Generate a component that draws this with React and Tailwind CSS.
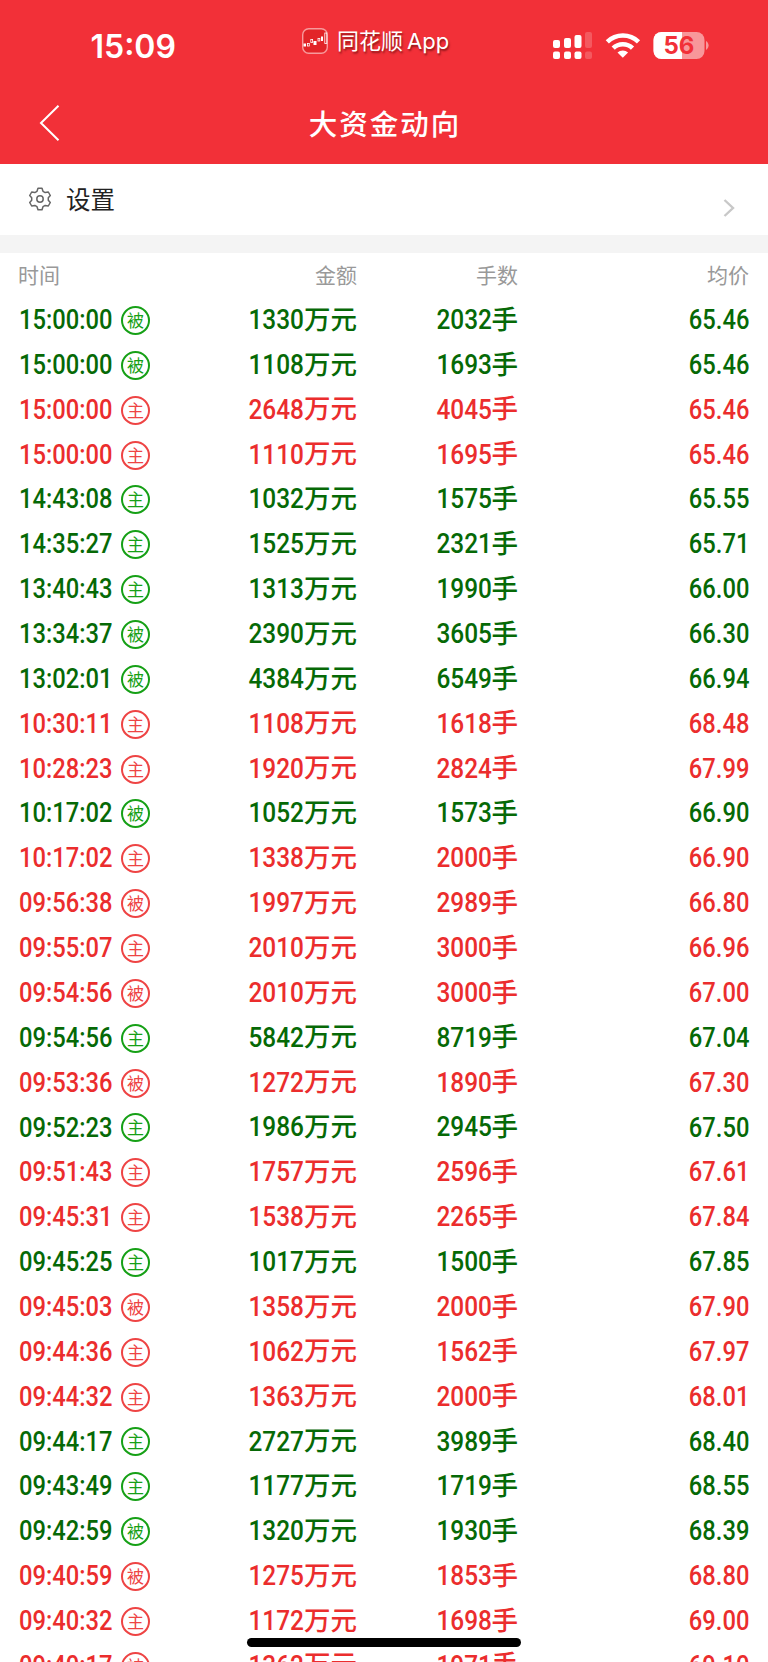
const rows = [
  ["15:00:00", "被", "1330", "2032", "65.46", 0],
  ["15:00:00", "被", "1108", "1693", "65.46", 0],
  ["15:00:00", "主", "2648", "4045", "65.46", 1],
  ["15:00:00", "主", "1110", "1695", "65.46", 1],
  ["14:43:08", "主", "1032", "1575", "65.55", 0],
  ["14:35:27", "主", "1525", "2321", "65.71", 0],
  ["13:40:43", "主", "1313", "1990", "66.00", 0],
  ["13:34:37", "被", "2390", "3605", "66.30", 0],
  ["13:02:01", "被", "4384", "6549", "66.94", 0],
  ["10:30:11", "主", "1108", "1618", "68.48", 1],
  ["10:28:23", "主", "1920", "2824", "67.99", 1],
  ["10:17:02", "被", "1052", "1573", "66.90", 0],
  ["10:17:02", "主", "1338", "2000", "66.90", 1],
  ["09:56:38", "被", "1997", "2989", "66.80", 1],
  ["09:55:07", "主", "2010", "3000", "66.96", 1],
  ["09:54:56", "被", "2010", "3000", "67.00", 1],
  ["09:54:56", "主", "5842", "8719", "67.04", 0],
  ["09:53:36", "被", "1272", "1890", "67.30", 1],
  ["09:52:23", "主", "1986", "2945", "67.50", 0],
  ["09:51:43", "主", "1757", "2596", "67.61", 1],
  ["09:45:31", "主", "1538", "2265", "67.84", 1],
  ["09:45:25", "主", "1017", "1500", "67.85", 0],
  ["09:45:03", "被", "1358", "2000", "67.90", 1],
  ["09:44:36", "主", "1062", "1562", "67.97", 1],
  ["09:44:32", "主", "1363", "2000", "68.01", 1],
  ["09:44:17", "主", "2727", "3989", "68.40", 0],
  ["09:43:49", "主", "1177", "1719", "68.55", 0],
  ["09:42:59", "被", "1320", "1930", "68.39", 0],
  ["09:40:59", "被", "1275", "1853", "68.80", 1],
  ["09:40:32", "主", "1172", "1698", "69.00", 1],
  ["09:40:17", "被", "1362", "1971", "69.10", 1],
];

const fits = {
  time: "origin-left scale-x-[0.885]",
  count: "origin-right scale-x-[0.91]",
  price: "origin-right scale-x-[0.885]",
};

function Num({ children, fit }) {
  return (
    <span className={`inline-block pt-[2px] font-[Roboto,sans-serif] text-[26.8px] font-medium leading-none ${fits[fit]}`}>
      {children}
    </span>
  );
}

function Unit({ children }) {
  return <span className="pb-[3px] text-[26.5px] font-medium leading-none">{children}</span>;
}

function Row({ row }) {
  const [time, kind, amount, lots, price, up] = row;
  return (
    <div className={`grid h-[44.86px] shrink-0 grid-cols-[121px_30px_206px_161px_231px] items-center ${up ? "text-[#eb2d2d]" : "text-[#066906]"}`}>
      <div className="flex pl-[18.5px]"><Num fit="time">{time}</Num></div>
      <div className={`mt-[2px] flex size-[29px] items-center justify-center rounded-full border-2 pb-[2px] text-[17px] leading-none ${up ? "border-[#ee4444] text-[#ee4444]" : "border-[#16a016] text-[#16a016]"}`}>{kind}</div>
      <div className="flex items-center justify-end"><Num fit="count">{amount}</Num><Unit>万元</Unit></div>
      <div className="flex items-center justify-end"><Num fit="count">{lots}</Num><Unit>手</Unit></div>
      <div className="flex justify-end"><Num fit="price">{price}</Num></div>
    </div>
  );
}

function StatusIcons() {
  return (
    <svg className="h-[30px] w-[160px]" viewBox="552 30 160 30">
      <g fill="#fff">
        <rect x="553" y="40" width="7" height="8" rx="2" />
        <rect x="564" y="38" width="7" height="10" rx="2" />
        <rect x="574.5" y="35" width="7" height="13" rx="2" />
        <rect x="585" y="32" width="7" height="16" rx="2" opacity=".2" />
        <rect x="553" y="51.5" width="7" height="7.5" rx="2" />
        <rect x="564" y="51.5" width="7" height="7.5" rx="2" />
        <rect x="574.5" y="51.5" width="7" height="7.5" rx="2" />
        <rect x="585" y="51.5" width="7" height="7.5" rx="2" opacity=".2" />
        <path d="M622.8 57.700l-5.300-5.200a7.800 7.800 0 0 1 10.600 0z" />
      </g>
      <g fill="none" stroke="#fff" strokeWidth="4.600">
        <path d="M607.300 41.800a22.600 22.600 0 0 1 31.200 0" />
        <path d="M613.200 48.200a13.800 13.800 0 0 1 19.300 0" />
      </g>
      <clipPath id="battery"><rect x="653.5" y="32" width="51" height="27" rx="8" /></clipPath>
      <g clipPath="url(#battery)">
        <rect x="653" y="32" width="52" height="27" fill="#f8979a" />
        <rect x="653" y="32" width="29" height="27" fill="#fff" />
      </g>
      <path d="M706 41a5.200 5.200 0 0 1 0 9z" fill="#f8979a" />
      <text x="679" y="54" textAnchor="middle" className="font-[Inter,sans-serif] text-[24px] font-bold" fill="#f23038">56</text>
    </svg>
  );
}

export default function App() {
  return (
    <div className="relative flex h-[1662px] w-[768px] flex-col overflow-hidden bg-white font-['Noto_Sans_CJK_SC',sans-serif]">
      <header className="h-[163.5px] shrink-0 bg-[#f23038] text-white">
        <div className="grid h-[86px] grid-cols-[302px_250px_1fr]">
          <div className="pl-[90.5px] pt-[30px] font-[Inter,sans-serif] text-[32px] font-semibold leading-[34px]">15:09</div>
          <div className="flex h-[82px] items-center gap-[9px]">
            <svg className="size-[26px]" viewBox="0 0 26 26">
              <rect x=".7" y=".7" width="24.6" height="24.6" rx="6" fill="#e22428" stroke="#f79a9c" strokeWidth="1.4" />
              <g fill="#fff"><rect x="1.5" y="15.5" width="2.5" height="3" /><rect x="11.5" y="13" width="3" height="4" /><rect x="19" y="8.5" width="2" height="4.5" /></g>
              <g fill="none" stroke="#fff" strokeWidth=".8"><rect x="5.5" y="15.5" width="1.8" height="2.5" /><rect x="8.8" y="11.5" width="1.8" height="3" /><rect x="16" y="10.5" width="1.8" height="2.5" /><rect x="22.8" y="5" width="2" height="10.5" /></g>
            </svg>
            <span className="whitespace-nowrap pb-[2px] text-[22px] leading-[26px] [text-shadow:1px_2px_2px_rgba(60,0,0,0.55)]">同花顺<span className="ml-[4px] font-[Inter,sans-serif]">App</span></span>
          </div>
          <div className="pt-[30px]"><StatusIcons /></div>
        </div>
        <div className="grid h-[74px] grid-cols-[120px_1fr_120px] items-center">
          <svg className="ml-[38px] h-[38px] w-[24px]" viewBox="0 0 24 38" fill="none" stroke="#fff" strokeWidth="2"><path d="M20.5 1.8 3 19l17.500 17.300" /></svg>
          <h1 className="pl-[2px] text-center text-[28.5px] font-medium leading-[36px] tracking-[2px]">大资金动向</h1>
        </div>
      </header>

      <div className="flex h-[71.5px] shrink-0 items-center">
        <svg className="ml-[28px] size-[24px]" viewBox="0 0 24 24" fill="none" stroke="#666" strokeWidth="1.500" strokeLinejoin="round">
          <path d="M10 1.300h4l1 3 2.200 1.300 3.100-.6 2 3.500-2 2.300v2.400l2 2.300-2 3.500-3.100-.6L15 19.700l-1 3h-4l-1-3-2.200-1.300-3.100.6-2-3.500 2-2.300v-2.400l-2-2.300 2-3.500 3.100.6L9 4.300z" />
          <circle cx="12" cy="12" r="3.200" />
        </svg>
        <span className="ml-[14px] text-[24.5px] leading-[30px] text-[#222]">设置</span>
        <svg className="ml-auto mr-[32px] mt-[18px] h-[20px] w-[14px]" viewBox="0 0 14 20" fill="none" stroke="#c8c8c8" strokeWidth="2.400"><path d="M2.500 2 11 10l-8.500 8" /></svg>
      </div>
      <div className="h-[18px] shrink-0 bg-[#f4f4f4]" />

      <div className="grid h-[44px] shrink-0 grid-cols-[151px_206px_161px_231px] items-center pb-[2px] text-[21px] leading-[30px] text-[#999]">
        <div className="pl-[18px]">时间</div>
        <div className="text-right">金额</div>
        <div className="text-right">手数</div>
        <div className="text-right">均价</div>
      </div>
      {rows.map((row, i) => <Row key={i} row={row} />)}

      <div className="absolute left-[247px] top-[1638px] h-[9px] w-[274px] rounded-full bg-black" />
    </div>
  );
}
